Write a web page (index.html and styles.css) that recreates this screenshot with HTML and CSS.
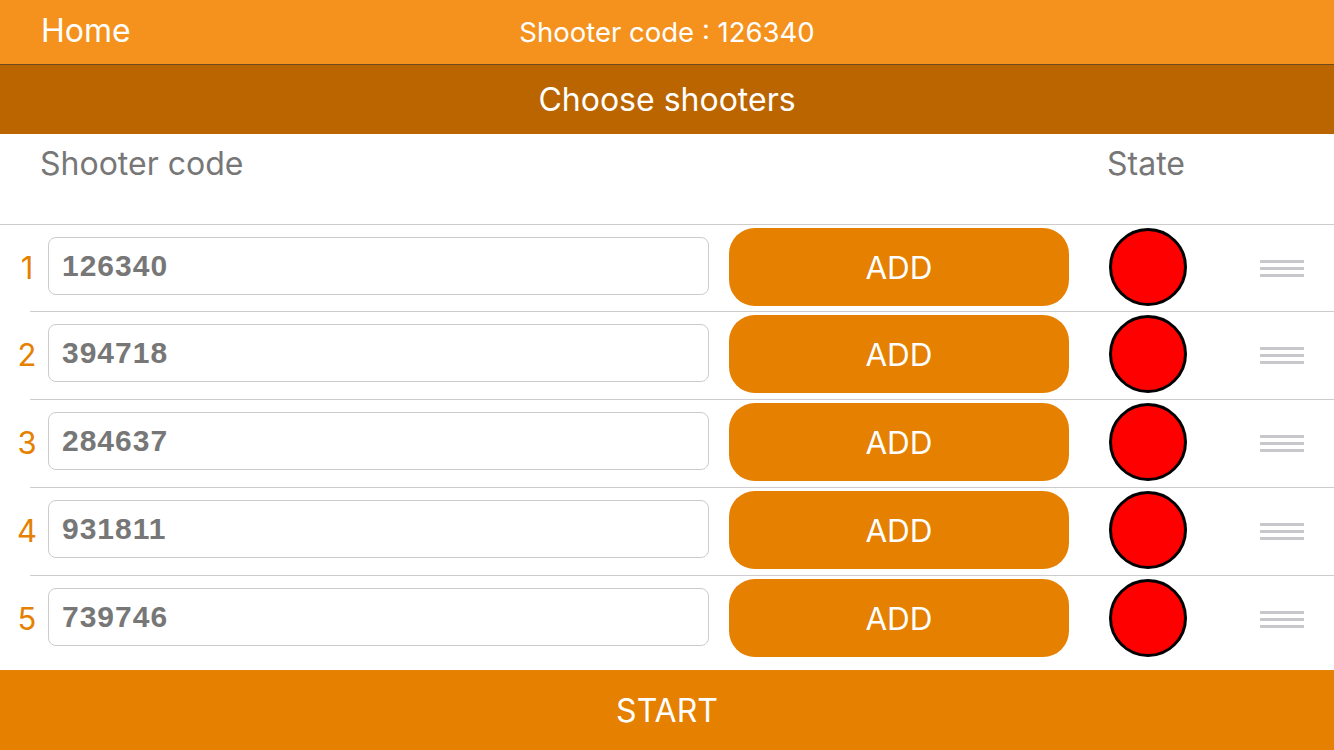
FILE: index.html
```html
<!DOCTYPE html>
<html lang="en">
<head>
<meta charset="utf-8">
<title>Choose shooters</title>
<link rel="stylesheet" href="styles.css">
</head>
<body>
<div class="app">
  <header class="topbar">
    <div class="home">Home</div>
    <div class="title">Shooter code : 126340</div>
    <div></div>
  </header>
  <div class="subbar">Choose shooters</div>
  <div class="colhead">
    <div class="ch-code">Shooter code</div>
    <div class="ch-state">State</div>
  </div>
  <div class="list">
    <div class="row first">
      <div class="num">1</div>
      <div class="field">126340</div>
      <div class="add">ADD</div>
      <div class="state"></div>
      <div class="handle"><span></span><span></span><span></span></div>
    </div>
    <div class="row">
      <div class="num">2</div>
      <div class="field">394718</div>
      <div class="add">ADD</div>
      <div class="state"></div>
      <div class="handle"><span></span><span></span><span></span></div>
    </div>
    <div class="row">
      <div class="num">3</div>
      <div class="field">284637</div>
      <div class="add">ADD</div>
      <div class="state"></div>
      <div class="handle"><span></span><span></span><span></span></div>
    </div>
    <div class="row">
      <div class="num">4</div>
      <div class="field">931811</div>
      <div class="add">ADD</div>
      <div class="state"></div>
      <div class="handle"><span></span><span></span><span></span></div>
    </div>
    <div class="row last">
      <div class="num">5</div>
      <div class="field">739746</div>
      <div class="add">ADD</div>
      <div class="state"></div>
      <div class="handle"><span></span><span></span><span></span></div>
    </div>
  </div>
  <div class="start">START</div>
</div>
</body>
</html>
```
FILE: styles.css
```css
html, body {
  margin: 0;
  padding: 0;
  background: #ffffff;
}
.app {
  width: 1334px;
  height: 750px;
  display: flex;
  flex-direction: column;
  font-family: Inter, "Liberation Sans", sans-serif;
  overflow: hidden;
}
.topbar {
  height: 64px;
  flex: none;
  background: #f5921e;
  border-bottom: 1px solid #6e4a1e;
  display: grid;
  grid-template-columns: 1fr auto 1fr;
  align-items: center;
  color: #ffffff;
}
.home {
  padding-left: 41px;
  font-size: 32px;
  padding-bottom: 4px;
}
.title {
  font-size: 27.5px;
}
.subbar {
  height: 69px;
  flex: none;
  background: #bb6500;
  color: #ffffff;
  font-size: 32px;
  display: flex;
  align-items: center;
  justify-content: center;
}
.colhead {
  height: 91px;
  flex: none;
  box-sizing: border-box;
  border-bottom: 1px solid #cccccc;
  display: flex;
  color: #777777;
  font-size: 32px;
  padding-top: 10px;
}
.ch-code {
  padding-left: 40px;
  width: 1067px;
}
.list {
  flex: 1;
}
.row {
  height: 88px;
  box-sizing: border-box;
  display: flex;
  align-items: flex-start;
  background: linear-gradient(#cccccc, #cccccc) 30px 100% / calc(100% - 30px) 1px no-repeat;
}
.row.first {
  height: 87px;
}
.row.last {
  background: none;
}
.num {
  width: 42px;
  padding-left: 6px;
  text-align: center;
  color: #e58000;
  font-size: 31px;
  line-height: 86px;
}
.field {
  width: 661px;
  height: 58px;
  margin-top: 12px;
  box-sizing: border-box;
  border: 1px solid #cccccc;
  border-radius: 8px;
  padding-left: 13px;
  display: flex;
  align-items: center;
  font-family: "Liberation Sans", Arial, sans-serif;
  font-weight: bold;
  font-size: 30px;
  letter-spacing: 1px;
  color: #777777;
}
.add {
  width: 340px;
  height: 78px;
  margin-top: 3px;
  margin-left: 20px;
  border-radius: 26px;
  background: #e58000;
  color: #ffffff;
  font-size: 31.5px;
  display: flex;
  align-items: center;
  justify-content: center;
}
.state {
  width: 78px;
  height: 78px;
  margin-top: 3px;
  margin-left: 40px;
  box-sizing: border-box;
  border: 3px solid #000000;
  border-radius: 50%;
  background: #ff0000;
}
.handle {
  margin-left: 73px;
  margin-top: 35px;
  width: 44px;
  display: flex;
  flex-direction: column;
  gap: 4.5px;
}
.handle span {
  display: block;
  height: 2.5px;
  background: #c7c7cc;
}
.start {
  height: 80px;
  flex: none;
  background: #e58000;
  color: #ffffff;
  font-size: 32px;
  display: flex;
  align-items: center;
  justify-content: center;
}
```
